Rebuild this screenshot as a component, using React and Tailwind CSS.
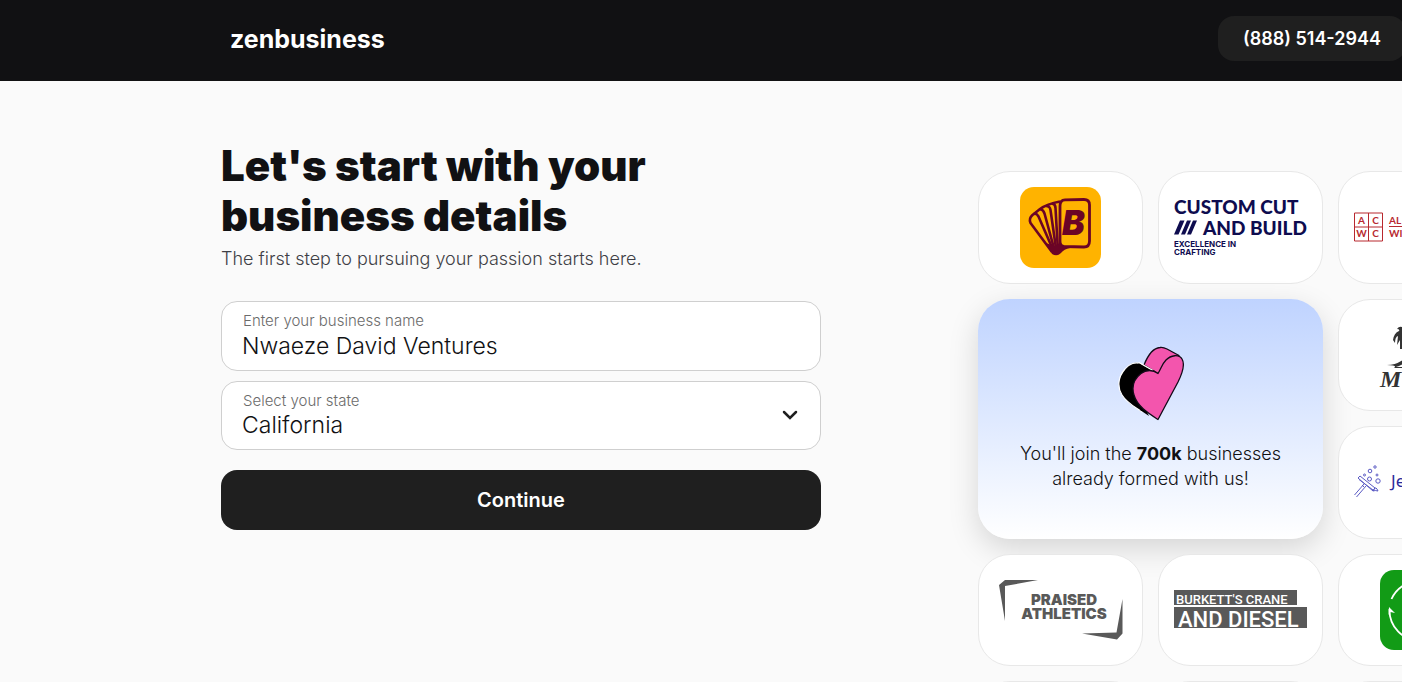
import { useState } from "react";

const states = ["Alabama", "Arizona", "California", "Colorado", "Florida", "New York", "Texas"];

function CardsLogo() {
  return (
    <svg viewBox="0 0 133 81" className="w-full" role="img" aria-label="B cards">
      <rect x="26" width="81" height="81" rx="14" fill="#ffb300" />
      <g fill="none" stroke="#6b0426" strokeWidth="2.6" strokeLinejoin="round">
        <path d="M58 65 L36.5 36 Q34.5 31.5 38.5 28 L46 22 Q53 17 66 14.5" />
        <path d="M60 65 L44.5 29.5 Q42.5 26 40 27" />
        <path d="M61 65 L50.5 26.5 Q49 22 46 22.5" />
        <path d="M62.5 65 L56.5 23 Q56 19 52 19" />
        <path d="M64 65 L61.5 21 Q61.5 17 58 16.5" />
        <path d="M66 61 V19 Q66 13 71 12.8 L90 12.5 Q95.5 12.5 95.5 18 V54 Q95.5 60 90 60 L70 59.5 Q66 59 66 54" strokeWidth="2.8" />
      </g>
      <path d="M52 56 L60 59 L66 56 Q67 60 76 61 Q70 62 67 66 Q63 70 58 67Z" fill="#6b0426" />
      <text x="68" y="48" fontSize="34" fill="#6b0426" className="font-[Inter,sans-serif] font-black italic">B</text>
    </svg>
  );
}

function CustomCutLogo() {
  return (
    <svg viewBox="0 0 133 81" className="w-full" fill="#0e0c4f" role="img" aria-label="Custom Cut and Build">
      <text x="0" y="27" fontSize="19" className="font-[Lato,sans-serif] font-black">CUSTOM CUT</text>
      <path d="M0 47.5 L6 33.5 H10.5 L4.5 47.5Z M7 47.5 L13 33.5 H17 L11 47.5Z M13 47.5 L19 33.5 H23 L17 47.5Z" />
      <text x="29" y="48" fontSize="19" className="font-[Lato,sans-serif] font-black">AND BUILD</text>
      <text x="0" y="60" fontSize="8" className="font-[Inter,sans-serif] font-bold">EXCELLENCE IN</text>
      <text x="0" y="68" fontSize="8" className="font-[Inter,sans-serif] font-bold">CRAFTING</text>
    </svg>
  );
}

function AcwcLogo() {
  return (
    <svg viewBox="0 0 133 81" className="w-full" fill="#b8282f" role="img" aria-label="ACWC">
      <path d="M.5 26 H28.5 V54 H.5Z M14.5 26 V54 M.5 40 H28.5 M35 39.5 H120" fill="none" stroke="#b8282f" />
      <g fontSize="10" textAnchor="middle" className="font-[Lato,sans-serif] font-bold">
        <text x="7.5" y="37">A</text>
        <text x="21.5" y="37">C</text>
        <text x="7.5" y="50">W</text>
        <text x="21.5" y="50">C</text>
      </g>
      <text x="35" y="37" fontSize="10" className="font-[Lato,sans-serif] font-bold">AL</text>
      <text x="35" y="50" fontSize="10" className="font-[Lato,sans-serif] font-bold">WI</text>
    </svg>
  );
}

function PalmLogo() {
  return (
    <svg viewBox="0 0 133 81" className="w-full" fill="#333" role="img" aria-label="Palm tree">
      <path d="M48 12 Q45 11 43 14 Q46 14 45 16 Q40 18 39 25 L41 28 Q41 22 44 21 L43 30 L46 25 L46 34 L50 34 V12Z" />
      <path d="M33 50 Q42 50 50 44 V48 Q46 51 42 52 H50 V53 H40 Q44 50 33 50Z" />
      <text x="26" y="72" fontSize="24" className="font-['Liberation_Serif',serif] font-bold italic">M</text>
    </svg>
  );
}

function SqueegeeLogo() {
  return (
    <svg viewBox="0 0 133 81" className="w-full" fill="none" stroke="#5a5ac4" role="img" aria-label="Squeegee">
      <path d="M4 36 L6 34 L21 46 L19 49Z M5 37.5 L19 48" />
      <path d="M10 42 L.5 53 M12 44 L2.5 55 M8 43 L10 45" />
      <path d="M19 49 Q21 44 23 47 L24 49 Q21 48 19 49" />
      <circle cx="15.5" cy="37" r="2" />
      <circle cx="16" cy="29" r="1.8" />
      <circle cx="21" cy="25" r="1.2" />
      <circle cx="10.5" cy="33" r="1" />
      <circle cx="23" cy="33" r="1" />
      <circle cx="24" cy="39" r="2.2" />
      <text x="37" y="45" fontSize="17" fill="#2a2a9c" stroke="none" className="font-['Noto_Sans',sans-serif]">Je</text>
    </svg>
  );
}

function PraisedLogo() {
  return (
    <svg viewBox="0 0 133 80" className="w-full" fill="#595959" role="img" aria-label="Praised Athletics">
      <path d="M5 15 L11 10 H44 L11 16 V51Z" />
      <path d="M128.5 29 V63.5 L123 69.5 L88 63.5 L122.5 62.5Z" />
      <g fontSize="15" textAnchor="middle" className="font-[Inter,sans-serif] font-black">
        <text x="70" y="35">PRAISED</text>
        <text x="70" y="49">ATHLETICS</text>
      </g>
    </svg>
  );
}

function BurkettLogo() {
  return (
    <svg viewBox="0 0 133 80" className="w-full" role="img" aria-label="Burkett's Crane and Diesel">
      <rect y="20" width="123" height="15" fill="#595959" />
      <rect y="37" width="133" height="21" fill="#595959" />
      <g fill="#fff" className="font-[Roboto,sans-serif] font-medium">
        <text x="2" y="34" fontSize="13">BURKETT'S CRANE</text>
        <text x="4" y="57" fontSize="22">AND DIESEL</text>
      </g>
    </svg>
  );
}

function GreenLogo() {
  return (
    <svg viewBox="0 0 133 80" className="w-full" role="img" aria-label="Green cycle">
      <rect x="26" width="80" height="80" rx="14" fill="#129b16" />
      <g fill="none" stroke="#fff" strokeWidth="1.8">
        <path d="M37.5 29 A31 31 0 0 1 94 29" />
        <path d="M35.5 39 A31 31 0 0 0 66 71" />
      </g>
      <path d="M35 37 L41 43 L36.5 42 L34.5 45Z" fill="#fff" />
    </svg>
  );
}

function Heart() {
  return (
    <svg viewBox="0 0 66 76" className="h-[76px] w-[66px]" aria-hidden="true" strokeLinejoin="round">
      <path d="M34 25 L23 18 C18 15 11 18 7 23 C0 31 -1 41 4 49 C9 57 17 61 24 66 L32 55Z" fill="#000" stroke="#fff" strokeWidth="1.2" />
      <path d="M22 64 L31 70 L24 56Z" fill="#000" />
      <path d="M26 19 C30 9 35 2 42 1.5 C45 1 47 2 49 3 L61 9.5 L40 27.5Z" fill="#f355ad" stroke="#120a18" strokeWidth="1.3" />
      {/* covers the lower edge of the lobe where it meets the dark side */}
      <path d="M21 17 L34 24.5 L30 26 L19 20Z" fill="#000" />
      <path d="M21 16.5 L35 24.5" stroke="#fff" strokeWidth="1.2" />
      <path d="M40 27.5 C35 23.5 28 23.5 23 27.5 C16 33 13.5 41 16 49 C19 60 30 67 40 73.5 L60 36 C64 28 67 18 64 13 C61 8 53 9 48 14 C44 18 43 23 40 27.5Z" fill="#f355ad" stroke="#120a18" strokeWidth="1.3" />
    </svg>
  );
}

function LogoCard({ children }) {
  return (
    <div className="flex items-center rounded-[32px] border border-[#e8e8e8] bg-white px-[15px]">
      {children}
    </div>
  );
}

export default function App() {
  const [name, setName] = useState("Nwaeze David Ventures");
  const [state, setState] = useState("California");

  return (
    <div className="flex h-screen flex-col overflow-hidden bg-[#fafafa] font-[Inter,sans-serif] text-[#111113]">
      <header className="flex h-[81px] shrink-0 items-center justify-between bg-[#111113] pb-1 pl-[230px] text-white">
        <a href="#" className="text-[25px] leading-8 font-bold">zenbusiness</a>
        <a href="tel:8885142944" className="-mr-1 flex h-[45px] items-center rounded-2xl bg-[#1f1f1f] px-[25px] text-lg font-semibold">
          (888) 514-2944
        </a>
      </header>

      <main className="flex justify-between pl-[221px]">
        <form className="w-[600px] pt-[60px]" onSubmit={(e) => e.preventDefault()}>
          <h1 className="text-[42px] leading-[50px] font-black">
            Let's start with your
            <br />
            business details
          </h1>
          <p className="mt-1 text-lg leading-7 font-light text-[#3f3f46]">
            The first step to pursuing your passion starts here.
          </p>

          <div className="mt-7 flex h-[70px] flex-col rounded-2xl border border-[#cfcfcf] bg-white px-5 pt-[9px]">
            <label htmlFor="business" className="px-px text-[15px] leading-5 font-light text-[#6b6b6b]">
              Enter your business name
            </label>
            <input
              id="business"
              type="text"
              value={name}
              onChange={(e) => setName(e.target.value)}
              className="h-[30px] w-full bg-transparent text-[23px] font-light outline-none"
            />
          </div>

          <div className="relative mt-[10px] flex h-[69px] flex-col rounded-2xl border border-[#cfcfcf] bg-white px-5 pt-[9px]">
            <label htmlFor="state" className="px-px text-[15px] leading-5 font-light text-[#6b6b6b]">
              Select your state
            </label>
            <select
              id="state"
              value={state}
              onChange={(e) => setState(e.target.value)}
              className="h-[28px] w-full appearance-none bg-transparent text-[23px] leading-7 font-light outline-none"
            >
              {states.map((s) => (
                <option key={s}>{s}</option>
              ))}
            </select>
            <svg viewBox="0 0 16 10" className="pointer-events-none absolute top-[28px] right-[22px] w-4" fill="none" stroke="#1f1f1f" strokeWidth="2.5" strokeLinecap="round" aria-hidden="true">
              <path d="M2 2 L8 8 L14 2" />
            </svg>
          </div>

          <button type="submit" className="mt-5 h-[60px] w-full rounded-2xl bg-[#1f1f1f] text-xl font-semibold text-white">
            Continue
          </button>
        </form>

        <section className="w-[424px] pt-[90px]">
          <div className="grid w-max grid-cols-[165px_165px_165px] grid-rows-[113px_112px_113px_112px_112px] gap-[15px]">
            <LogoCard><CardsLogo /></LogoCard>
            <LogoCard><CustomCutLogo /></LogoCard>
            <LogoCard><AcwcLogo /></LogoCard>
            <div className="col-span-2 row-span-2 flex flex-col items-center justify-center gap-[19px] rounded-[32px] bg-linear-to-b from-[#bfd3ff] to-white pb-[2px] text-center shadow-[0_10px_30px_rgba(0,0,0,0.15)]">
              <Heart />
              <p className="text-lg leading-[25px] font-light">
                You'll join the <strong className="font-bold">700k</strong> businesses
                <br />
                already formed with us!
              </p>
            </div>
            <LogoCard><PalmLogo /></LogoCard>
            <LogoCard><SqueegeeLogo /></LogoCard>
            <LogoCard><PraisedLogo /></LogoCard>
            <LogoCard><BurkettLogo /></LogoCard>
            <LogoCard><GreenLogo /></LogoCard>
            <LogoCard />
            <LogoCard />
            <LogoCard />
          </div>
        </section>
      </main>
    </div>
  );
}
